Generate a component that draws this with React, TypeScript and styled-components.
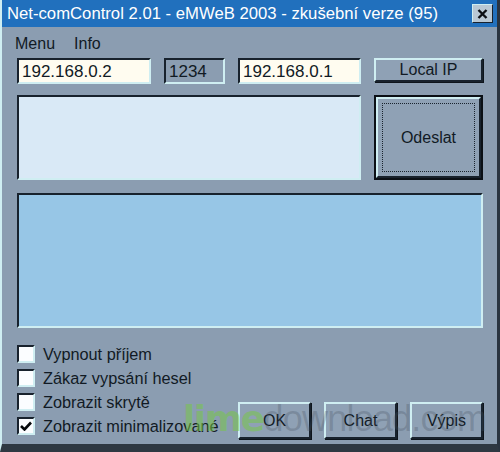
import React from "react";
import styled, { createGlobalStyle, css } from "styled-components";

const Global = createGlobalStyle`
  html, body { margin: 0; padding: 0; background: #8b9db1; }
  * { box-sizing: border-box; }
`;

const FONT = `"Liberation Sans", Arial, sans-serif`;
const DARK = "#18222d";
const LIGHT = "#cfeef2";

const sunken = css`
  border-style: solid;
  border-width: 2px;
  border-color: ${DARK} ${LIGHT} ${LIGHT} ${DARK};
`;
const raised = css`
  border-style: solid;
  border-width: 2px;
  border-color: ${LIGHT} ${DARK} ${DARK} ${LIGHT};
`;

const Window = styled.div`
  position: relative;
  width: 500px;
  height: 452px;
  background: #8b9db1;
  border-left: 2px solid ${LIGHT};
  border-right: 3px solid #2a3440;
  border-bottom: 8px solid #2e3842;
  display: flex;
  flex-direction: column;
  font-family: ${FONT};
  color: #111a24;
  overflow: hidden;
`;

const TitleBar = styled.div`
  height: 27px;
  flex: none;
  background: #2170bd;
  color: #ffffff;
  display: flex;
  align-items: center;
  justify-content: space-between;
  padding: 0 4px 0 5px;
  font-size: 16.7px;
`;

const CloseBtn = styled.div`
  width: 21px;
  height: 19px;
  background: #b9c8d4;
  ${raised};
  border-width: 1px;
  display: flex;
  align-items: center;
  justify-content: center;
`;

const MenuBar = styled.div`
  height: 31px;
  flex: none;
  display: flex;
  align-items: center;
  gap: 19px;
  padding: 2px 0 0 13px;
  font-size: 16px;
`;

const Content = styled.div`
  padding: 0 14px 0 15px;
  display: flex;
  flex-direction: column;
`;

const TopRow = styled.div`
  display: grid;
  grid-template-columns: 134px 61px 123px 109px;
  column-gap: 13px;
  align-items: start;
`;

const Field = styled.div<{ $bg: string }>`
  ${sunken};
  height: 26px;
  background: ${(p) => p.$bg};
  font-size: 17px;
  padding: 1px 0 0 3px;
  display: flex;
  align-items: center;
  white-space: nowrap;
  overflow: hidden;
`;

const Button = styled.div<{ $w?: number; $h: number }>`
  ${raised};
  width: ${(p) => (p.$w ? `${p.$w}px` : "auto")};
  height: ${(p) => p.$h}px;
  background: #8fa1b5;
  display: flex;
  align-items: center;
  justify-content: center;
  font-size: 16px;
  box-shadow: 1px 1px 0 #0e151c;
`;

const MidRow = styled.div`
  margin-top: 11px;
  display: grid;
  grid-template-columns: 1fr 109px;
  column-gap: 13px;
  height: 85px;
`;

const Pane = styled.div<{ $bg: string }>`
  ${sunken};
  background: ${(p) => p.$bg};
`;

const DefaultButton = styled.div`
  border: 2px solid #0b1016;
  display: flex;
`;

const DefaultInner = styled.div`
  flex: 1;
  ${raised};
  background: #8fa1b5;
  padding: 4px;
  display: flex;
`;

const Focus = styled.div`
  flex: 1;
  border: 1px dotted #1a242e;
  display: flex;
  align-items: center;
  justify-content: center;
  font-size: 16px;
`;

const BigPane = styled(Pane)`
  margin-top: 13px;
  height: 135px;
`;

const Bottom = styled.div`
  margin-top: 17px;
  display: flex;
  justify-content: space-between;
`;

const Checks = styled.div`
  display: flex;
  flex-direction: column;
  gap: 6px;
`;

const CheckRow = styled.div`
  display: flex;
  align-items: center;
  gap: 8px;
  height: 18px;
  font-size: 16.3px;
  white-space: nowrap;
`;

const Box = styled.div`
  width: 18px;
  height: 18px;
  background: #fbfdff;
  ${sunken};
  display: flex;
  align-items: center;
  justify-content: center;
`;

const Buttons = styled.div`
  margin-top: 57px;
  display: flex;
  gap: 13px;
`;

const Watermark = styled.div`
  position: absolute;
  left: 181px;
  top: 399px;
  font-size: 36px;
  line-height: 40px;
  pointer-events: none;
  white-space: nowrap;
`;

const WmLime = styled.span`
  font-family: "DejaVu Sans", sans-serif;
  font-weight: bold;
  letter-spacing: -1.5px;
  color: rgba(120, 200, 70, 0.55);
`;
const WmRest = styled.span`
  font-family: "Liberation Sans", Arial, sans-serif;
  letter-spacing: -0.8px;
  color: rgba(70, 82, 96, 0.28);
`;

const checks: { label: string; checked: boolean }[] = [
  { label: "Vypnout příjem", checked: false },
  { label: "Zákaz vypsání hesel", checked: false },
  { label: "Zobrazit skrytě", checked: false },
  { label: "Zobrazit minimalizované", checked: true },
];

export default function App() {
  return (
    <>
      <Global />
      <Window>
        <TitleBar>
          <span>Net-comControl 2.01 - eMWeB 2003 - zkušební verze (95)</span>
          <CloseBtn>
            <svg width="11" height="10" viewBox="0 0 11 10">
              <path d="M1.5 1 L9.5 9 M9.5 1 L1.5 9" stroke="#0b0f14" strokeWidth="2.4" />
            </svg>
          </CloseBtn>
        </TitleBar>
        <MenuBar>
          <span>Menu</span>
          <span>Info</span>
        </MenuBar>
        <Content>
          <TopRow>
            <Field $bg="#fffcf0">192.168.0.2</Field>
            <Field $bg="#8b9db1">1234</Field>
            <Field $bg="#fffcf0">192.168.0.1</Field>
            <Button $h={24}>Local IP</Button>
          </TopRow>
          <MidRow>
            <Pane $bg="#d9e9f6" />
            <DefaultButton>
              <DefaultInner>
                <Focus>Odeslat</Focus>
              </DefaultInner>
            </DefaultButton>
          </MidRow>
          <BigPane $bg="#97c6e6" />
          <Bottom>
            <Checks>
              {checks.map((c) => (
                <CheckRow key={c.label}>
                  <Box>
                    {c.checked && (
                      <svg width="12" height="10" viewBox="0 0 12 10">
                        <path d="M1 5 L4.5 8.5 L11 1.5" stroke="#05080b" strokeWidth="2.6" fill="none" />
                      </svg>
                    )}
                  </Box>
                  <span>{c.label}</span>
                </CheckRow>
              ))}
            </Checks>
            <Buttons>
              <Button $w={73} $h={37}>OK</Button>
              <Button $w={73} $h={37}>Chat</Button>
              <Button $w={73} $h={37}>Výpis</Button>
            </Buttons>
          </Bottom>
        </Content>
        <Watermark>
          <WmLime>lime</WmLime>
          <WmRest>download.com</WmRest>
        </Watermark>
      </Window>
    </>
  );
}
